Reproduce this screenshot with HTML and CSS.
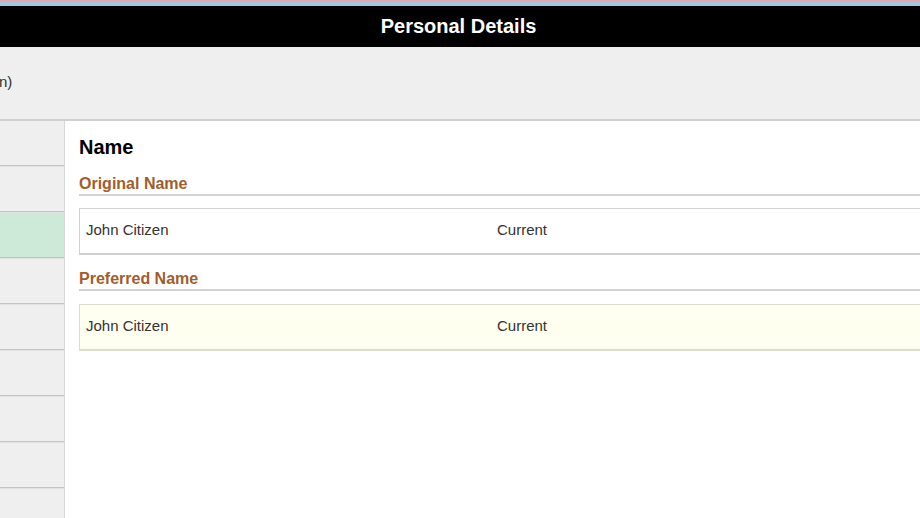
FILE: index.html
```html
<!DOCTYPE html>
<html>
<head>
<meta charset="utf-8">
<link rel="stylesheet" href="styles.css">
</head>
<body>
<div class="stripe-pink"></div>
<div class="stripe-blue"></div>
<header class="titlebar">Personal Details</header>
<section class="infobar"><span class="info-text">n)</span></section>
<div class="layout">
  <nav class="sidebar">
    <div class="nav-item"></div>
    <div class="nav-item"></div>
    <div class="nav-item active"></div>
    <div class="nav-item"></div>
    <div class="nav-item"></div>
    <div class="nav-item"></div>
    <div class="nav-item"></div>
    <div class="nav-item"></div>
    <div class="nav-item"></div>
  </nav>
  <main class="content">
    <h1 class="page-heading">Name</h1>
    <h2 class="group-heading">Original Name</h2>
    <div class="name-row">
      <span class="col-name">John Citizen</span>
      <span class="col-status">Current</span>
    </div>
    <h2 class="group-heading second">Preferred Name</h2>
    <div class="name-row highlight">
      <span class="col-name">John Citizen</span>
      <span class="col-status">Current</span>
    </div>
  </main>
</div>
</body>
</html>
```

FILE: styles.css
```css
html, body {
  margin: 0;
  padding: 0;
  background: #ffffff;
  overflow: hidden;
  font-family: "Liberation Sans", Arial, sans-serif;
  color: #333333;
}
.stripe-pink {
  height: 2px;
  background: #e3a7ae;
}
.stripe-blue {
  height: 4px;
  background: #a9c3e2;
}
.titlebar {
  height: 41px;
  background: #000000;
  color: #ffffff;
  font-weight: bold;
  font-size: 20px;
  display: flex;
  align-items: center;
  justify-content: center;
  padding-right: 3px;
}
.infobar {
  height: 72px;
  background: #efefef;
  border-bottom: 2px solid #cfcfcf;
  display: flex;
  align-items: center;
  font-size: 15px;
  color: #333;
}
.info-text {
  margin-left: -1px;
  margin-top: -3px;
}
.layout {
  display: flex;
  height: 400px;
}
.sidebar {
  width: 64px;
  flex: none;
  background: #efefef;
  border-right: 1px solid #d6d6d6;
}
.nav-item {
  height: 44px;
  border-bottom: 1px solid #c4c4c4;
  box-shadow: 0 1px 0 #e2e2e2;
  margin-bottom: 1px;
}
.nav-item.active {
  background: #cdead8;
}
.content {
  flex: none;
  width: 1000px;
  padding-left: 14px;
  padding-top: 14px;
}
.page-heading {
  margin: 0;
  font-size: 20px;
  font-weight: bold;
  color: #000000;
  line-height: 25px;
  padding-left: 0;
}
.group-heading {
  margin: 0;
  margin-top: 14px;
  font-size: 16px;
  font-weight: bold;
  color: #a25d2b;
  line-height: 20px;
  padding-bottom: 0;
  border-bottom: 2px solid #d3d3d3;
}
.group-heading.second {
  margin-top: 14px;
}
.name-row {
  margin-top: 12px;
  height: 41px;
  padding-bottom: 3px;
  border: 1px solid #d0d0d0;
  border-bottom: 2px solid #d0d0d0;
  background: #ffffff;
  display: flex;
  align-items: center;
  font-size: 15px;
  color: #333333;
}
.name-row.highlight {
  margin-top: 13px;
  background: #fffff0;
  border-color: #dcdcd0;
}
.col-name {
  width: 411px;
  padding-left: 6px;
}
```
